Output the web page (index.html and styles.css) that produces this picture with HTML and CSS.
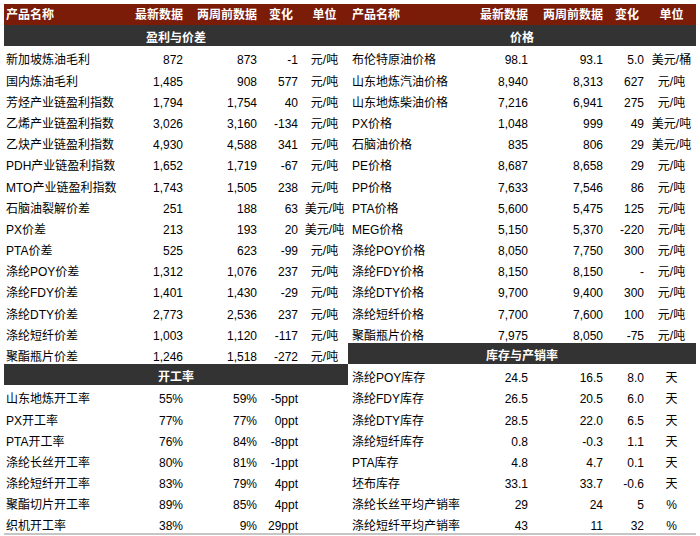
FILE: index.html
```html
<!DOCTYPE html>
<html lang="zh">
<head>
<meta charset="utf-8">
<link rel="stylesheet" href="styles.css">
</head>
<body>
<div class="wrap">
  <table class="tbl tbl-left">
    <colgroup>
      <col class="c-name-l"><col class="c-new"><col class="c-old"><col class="c-chg"><col class="c-unit-l">
    </colgroup>
    <thead>
      <tr><th class="name">产品名称</th><th class="num">最新数据</th><th class="num">两周前数据</th><th class="chg">变化</th><th class="unit">单位</th></tr>
    </thead>
    <tbody>
      <tr class="sec"><td colspan="5">盈利与价差</td></tr>
      <tr><td class="name">新加坡炼油毛利</td><td class="num">872</td><td class="num">873</td><td class="num">-1</td><td class="unit">元/吨</td></tr>
      <tr><td class="name">国内炼油毛利</td><td class="num">1,485</td><td class="num">908</td><td class="num">577</td><td class="unit">元/吨</td></tr>
      <tr><td class="name">芳烃产业链盈利指数</td><td class="num">1,794</td><td class="num">1,754</td><td class="num">40</td><td class="unit">元/吨</td></tr>
      <tr><td class="name">乙烯产业链盈利指数</td><td class="num">3,026</td><td class="num">3,160</td><td class="num">-134</td><td class="unit">元/吨</td></tr>
      <tr><td class="name">乙炔产业链盈利指数</td><td class="num">4,930</td><td class="num">4,588</td><td class="num">341</td><td class="unit">元/吨</td></tr>
      <tr><td class="name">PDH产业链盈利指数</td><td class="num">1,652</td><td class="num">1,719</td><td class="num">-67</td><td class="unit">元/吨</td></tr>
      <tr><td class="name">MTO产业链盈利指数</td><td class="num">1,743</td><td class="num">1,505</td><td class="num">238</td><td class="unit">元/吨</td></tr>
      <tr><td class="name">石脑油裂解价差</td><td class="num">251</td><td class="num">188</td><td class="num">63</td><td class="unit">美元/吨</td></tr>
      <tr><td class="name">PX价差</td><td class="num">213</td><td class="num">193</td><td class="num">20</td><td class="unit">美元/吨</td></tr>
      <tr><td class="name">PTA价差</td><td class="num">525</td><td class="num">623</td><td class="num">-99</td><td class="unit">元/吨</td></tr>
      <tr><td class="name">涤纶POY价差</td><td class="num">1,312</td><td class="num">1,076</td><td class="num">237</td><td class="unit">元/吨</td></tr>
      <tr><td class="name">涤纶FDY价差</td><td class="num">1,401</td><td class="num">1,430</td><td class="num">-29</td><td class="unit">元/吨</td></tr>
      <tr><td class="name">涤纶DTY价差</td><td class="num">2,773</td><td class="num">2,536</td><td class="num">237</td><td class="unit">元/吨</td></tr>
      <tr><td class="name">涤纶短纤价差</td><td class="num">1,003</td><td class="num">1,120</td><td class="num">-117</td><td class="unit">元/吨</td></tr>
      <tr><td class="name">聚酯瓶片价差</td><td class="num">1,246</td><td class="num">1,518</td><td class="num">-272</td><td class="unit">元/吨</td></tr>
      <tr class="sec"><td colspan="5">开工率</td></tr>
      <tr><td class="name">山东地炼开工率</td><td class="num">55%</td><td class="num">59%</td><td class="num">-5ppt</td><td class="unit"></td></tr>
      <tr><td class="name">PX开工率</td><td class="num">77%</td><td class="num">77%</td><td class="num">0ppt</td><td class="unit"></td></tr>
      <tr><td class="name">PTA开工率</td><td class="num">76%</td><td class="num">84%</td><td class="num">-8ppt</td><td class="unit"></td></tr>
      <tr><td class="name">涤纶长丝开工率</td><td class="num">80%</td><td class="num">81%</td><td class="num">-1ppt</td><td class="unit"></td></tr>
      <tr><td class="name">涤纶短纤开工率</td><td class="num">83%</td><td class="num">79%</td><td class="num">4ppt</td><td class="unit"></td></tr>
      <tr><td class="name">聚酯切片开工率</td><td class="num">89%</td><td class="num">85%</td><td class="num">4ppt</td><td class="unit"></td></tr>
      <tr><td class="name">织机开工率</td><td class="num">38%</td><td class="num">9%</td><td class="num">29ppt</td><td class="unit"></td></tr>
    </tbody>
  </table>
  <table class="tbl tbl-right">
    <colgroup>
      <col class="c-name-r"><col class="c-new"><col class="c-old-r"><col class="c-chg"><col class="c-unit-r">
    </colgroup>
    <thead>
      <tr><th class="name">产品名称</th><th class="num">最新数据</th><th class="num">两周前数据</th><th class="chg">变化</th><th class="unit">单位</th></tr>
    </thead>
    <tbody>
      <tr class="sec"><td colspan="5">价格</td></tr>
      <tr><td class="name">布伦特原油价格</td><td class="num">98.1</td><td class="num">93.1</td><td class="num">5.0</td><td class="unit">美元/桶</td></tr>
      <tr><td class="name">山东地炼汽油价格</td><td class="num">8,940</td><td class="num">8,313</td><td class="num">627</td><td class="unit">元/吨</td></tr>
      <tr><td class="name">山东地炼柴油价格</td><td class="num">7,216</td><td class="num">6,941</td><td class="num">275</td><td class="unit">元/吨</td></tr>
      <tr><td class="name">PX价格</td><td class="num">1,048</td><td class="num">999</td><td class="num">49</td><td class="unit">美元/吨</td></tr>
      <tr><td class="name">石脑油价格</td><td class="num">835</td><td class="num">806</td><td class="num">29</td><td class="unit">美元/吨</td></tr>
      <tr><td class="name">PE价格</td><td class="num">8,687</td><td class="num">8,658</td><td class="num">29</td><td class="unit">元/吨</td></tr>
      <tr><td class="name">PP价格</td><td class="num">7,633</td><td class="num">7,546</td><td class="num">86</td><td class="unit">元/吨</td></tr>
      <tr><td class="name">PTA价格</td><td class="num">5,600</td><td class="num">5,475</td><td class="num">125</td><td class="unit">元/吨</td></tr>
      <tr><td class="name">MEG价格</td><td class="num">5,150</td><td class="num">5,370</td><td class="num">-220</td><td class="unit">元/吨</td></tr>
      <tr><td class="name">涤纶POY价格</td><td class="num">8,050</td><td class="num">7,750</td><td class="num">300</td><td class="unit">元/吨</td></tr>
      <tr><td class="name">涤纶FDY价格</td><td class="num">8,150</td><td class="num">8,150</td><td class="num">-</td><td class="unit">元/吨</td></tr>
      <tr><td class="name">涤纶DTY价格</td><td class="num">9,700</td><td class="num">9,400</td><td class="num">300</td><td class="unit">元/吨</td></tr>
      <tr><td class="name">涤纶短纤价格</td><td class="num">7,700</td><td class="num">7,600</td><td class="num">100</td><td class="unit">元/吨</td></tr>
      <tr><td class="name">聚酯瓶片价格</td><td class="num">7,975</td><td class="num">8,050</td><td class="num">-75</td><td class="unit">元/吨</td></tr>
      <tr class="sec"><td colspan="5">库存与产销率</td></tr>
      <tr><td class="name">涤纶POY库存</td><td class="num">24.5</td><td class="num">16.5</td><td class="num">8.0</td><td class="unit">天</td></tr>
      <tr><td class="name">涤纶FDY库存</td><td class="num">26.5</td><td class="num">20.5</td><td class="num">6.0</td><td class="unit">天</td></tr>
      <tr><td class="name">涤纶DTY库存</td><td class="num">28.5</td><td class="num">22.0</td><td class="num">6.5</td><td class="unit">天</td></tr>
      <tr><td class="name">涤纶短纤库存</td><td class="num">0.8</td><td class="num">-0.3</td><td class="num">1.1</td><td class="unit">天</td></tr>
      <tr><td class="name">PTA库存</td><td class="num">4.8</td><td class="num">4.7</td><td class="num">0.1</td><td class="unit">天</td></tr>
      <tr><td class="name">坯布库存</td><td class="num">33.1</td><td class="num">33.7</td><td class="num">-0.6</td><td class="unit">天</td></tr>
      <tr><td class="name">涤纶长丝平均产销率</td><td class="num">29</td><td class="num">24</td><td class="num">5</td><td class="unit">%</td></tr>
      <tr><td class="name">涤纶短纤平均产销率</td><td class="num">43</td><td class="num">11</td><td class="num">32</td><td class="unit">%</td></tr>
    </tbody>
  </table>
</div>
</body>
</html>
```
FILE: styles.css
```css
html, body {
  margin: 0;
  padding: 0;
  background: #ffffff;
}
body {
  font-family: "Liberation Sans", "Noto Sans CJK SC", sans-serif;
  font-size: 12px;
  color: #000000;
}
.wrap {
  display: flex;
  align-items: flex-start;
  padding: 4px 4px 0 4px;
}
.tbl {
  border-collapse: collapse;
  border-spacing: 0;
  table-layout: fixed;
  border-bottom: 2px solid #c6c6c6;
}
.tbl-left { width: 344px; }
.tbl-right { width: 348px; }

.c-name-l { width: 128px; }
.c-name-r { width: 129px; }
.c-new { width: 54px; }
.c-old { width: 74px; }
.c-old-r { width: 75px; }
.c-chg { width: 41px; }
.c-unit-l { width: 47px; }
.c-unit-r { width: 49px; }

.tbl th, .tbl td {
  padding: 0;
  line-height: 14px;
  vertical-align: bottom;
  white-space: nowrap;
}
.tbl thead tr { height: 21px; }
.tbl thead th {
  background: #7a1c08;
  color: #ffffff;
  font-weight: bold;
  vertical-align: middle;
  line-height: 14px;
  padding: 0;
}
.tbl tbody tr { height: 21.2px; }

.tbl .sec td {
  background: #333333;
  color: #ffffff;
  font-weight: bold;
  text-align: center;
  line-height: 13px;
  padding: 0 0 1px 0;
}

.tbl .name {
  text-align: left;
  padding-left: 2px;
}
.tbl-right .name { padding-left: 4px; }
.tbl .num {
  text-align: right;
  padding-right: 3px;
}
.tbl th.chg {
  text-align: right;
  padding-right: 8px;
}
.tbl .unit {
  text-align: center;
}
```
